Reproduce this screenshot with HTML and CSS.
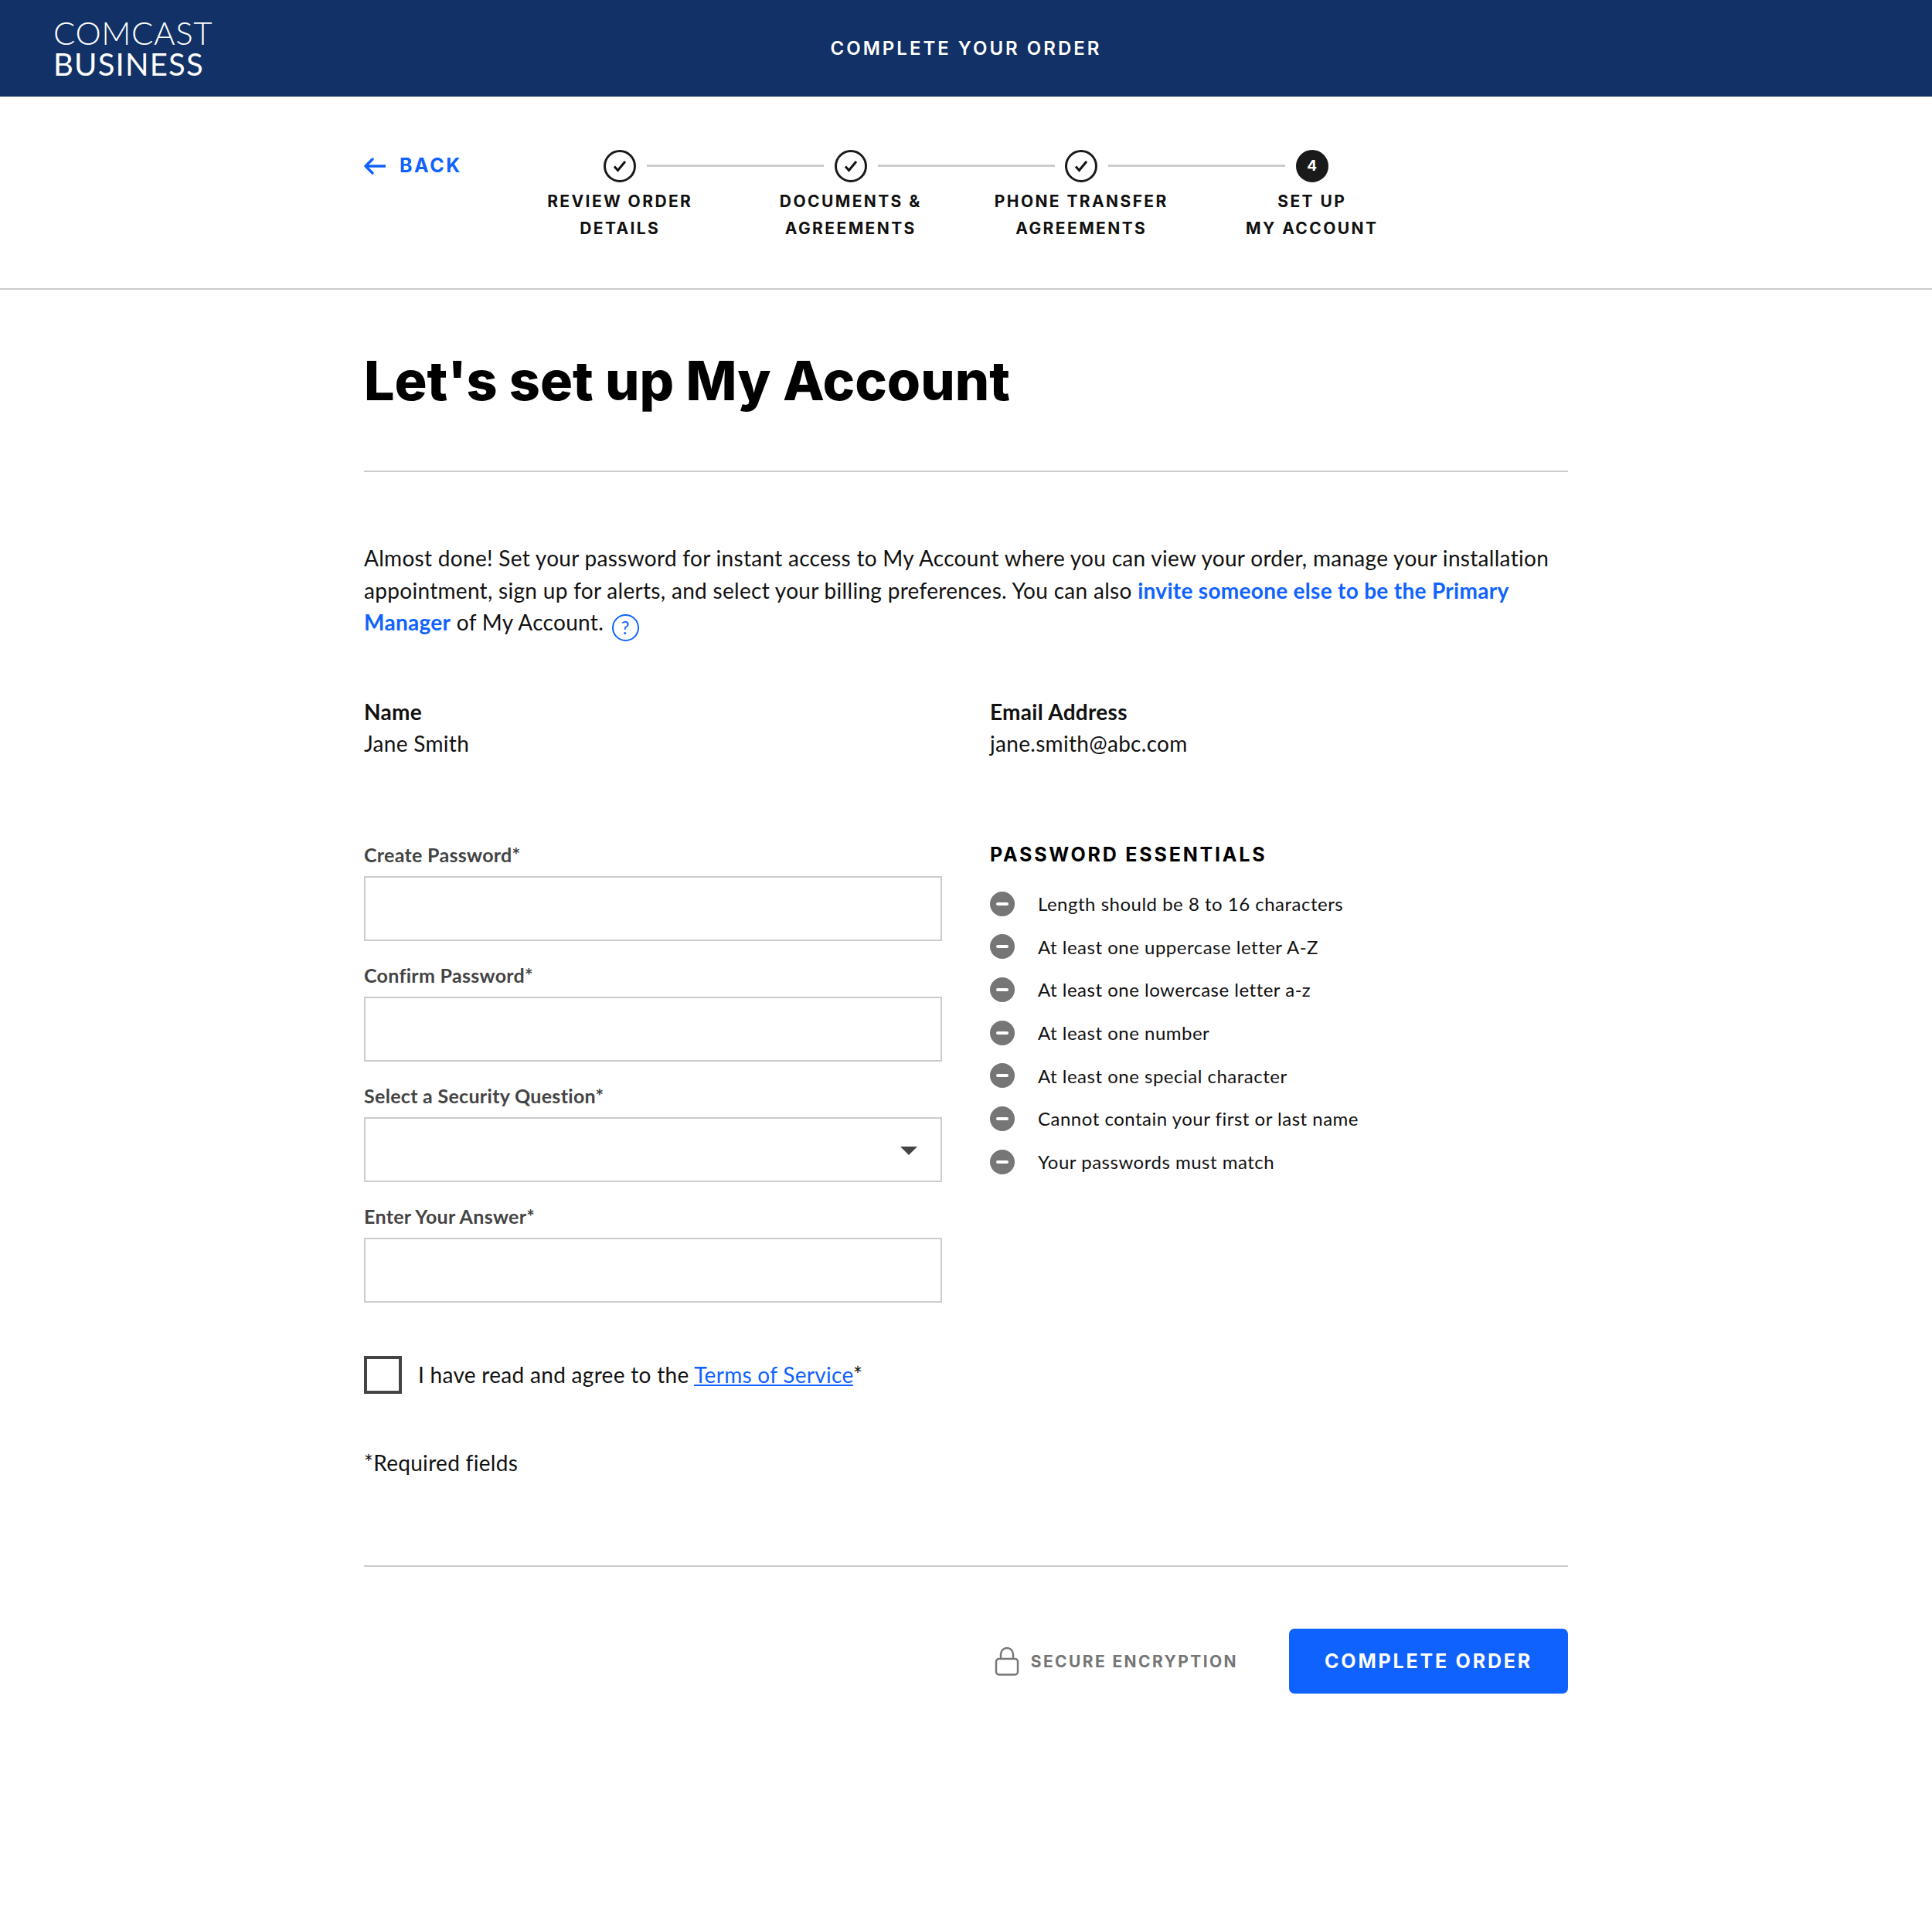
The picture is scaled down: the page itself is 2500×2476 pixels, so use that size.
FILE: index.html
```html
<!DOCTYPE html>
<html lang="en">
<head>
    <meta charset="UTF-8">
    <title>Complete Your Order</title>
    <link rel="stylesheet" href="styles.css">
</head>
<body>
    <div class="header">
        <div class="logo">
            <span class="logo-top">COMCAST</span>
            <span class="logo-bottom">BUSINESS</span>
        </div>
        <div class="header-title">COMPLETE YOUR ORDER</div>
    </div>

    <div class="progress">
        <div class="progress-inner">
            <a class="back" href="#">
                <svg width="28" height="22" viewBox="0 0 28 22"><path d="M27 11H2M11 2l-9 9 9 9" fill="none" stroke="#0f62fe" stroke-width="3.4" stroke-linecap="round" stroke-linejoin="round"/></svg>
                <span>BACK</span>
            </a>
            <div class="steps">
                <div class="step">
                    <div class="step-icon"><svg width="20" height="18" viewBox="0 0 20 18"><path d="M3 9.5l4.5 5L17 3" fill="none" stroke="#111" stroke-width="3"/></svg></div>
                    <div class="step-label">REVIEW ORDER<br>DETAILS</div>
                </div>
                <div class="step">
                    <div class="step-icon"><svg width="20" height="18" viewBox="0 0 20 18"><path d="M3 9.5l4.5 5L17 3" fill="none" stroke="#111" stroke-width="3"/></svg></div>
                    <div class="step-label">DOCUMENTS &amp;<br>AGREEMENTS</div>
                </div>
                <div class="step">
                    <div class="step-icon"><svg width="20" height="18" viewBox="0 0 20 18"><path d="M3 9.5l4.5 5L17 3" fill="none" stroke="#111" stroke-width="3"/></svg></div>
                    <div class="step-label">PHONE TRANSFER<br>AGREEMENTS</div>
                </div>
                <div class="step step-current">
                    <div class="step-icon">4</div>
                    <div class="step-label">SET UP<br>MY ACCOUNT</div>
                </div>
            </div>
        </div>
    </div>

    <div class="container">
        <h1>Let's set up My Account</h1>

        <p class="intro">Almost done! Set your password for instant access to My Account where you can view your order, manage your installation appointment, sign up for alerts, and select your billing preferences. You can also <a href="#">invite someone else to be the Primary Manager</a> of My Account. <span class="help">?</span></p>

        <div class="two-col user-info">
            <div>
                <div class="info-label">Name</div>
                <div>Jane Smith</div>
            </div>
            <div>
                <div class="info-label">Email Address</div>
                <div>jane.smith@abc.com</div>
            </div>
        </div>

        <div class="two-col form-row">
            <form class="fields">
                <div class="form-group">
                    <label for="password">Create Password*</label>
                    <input type="password" id="password">
                </div>
                <div class="form-group">
                    <label for="confirm">Confirm Password*</label>
                    <input type="password" id="confirm">
                </div>
                <div class="form-group">
                    <label for="question">Select a Security Question*</label>
                    <div class="select-box" id="question"></div>
                </div>
                <div class="form-group">
                    <label for="answer">Enter Your Answer*</label>
                    <input type="text" id="answer">
                </div>
            </form>
            <div class="essentials">
                <h2>PASSWORD ESSENTIALS</h2>
                <ul>
                    <li><span class="minus"></span>Length should be 8 to 16 characters</li>
                    <li><span class="minus"></span>At least one uppercase letter A-Z</li>
                    <li><span class="minus"></span>At least one lowercase letter a-z</li>
                    <li><span class="minus"></span>At least one number</li>
                    <li><span class="minus"></span>At least one special character</li>
                    <li><span class="minus"></span>Cannot contain your first or last name</li>
                    <li><span class="minus"></span>Your passwords must match</li>
                </ul>
            </div>
        </div>

        <div class="terms">
            <span class="checkbox"></span>
            <span>I have read and agree to the <a href="#">Terms of Service</a>*</span>
        </div>

        <p class="required">*Required fields</p>

        <div class="footer-row">
            <div class="secure">
                <svg width="32" height="37" viewBox="0 0 32 37"><path d="M8 16V9a8 8 0 0 1 16 0v7" fill="none" stroke="#767676" stroke-width="2.4"/><rect x="2" y="15" width="28" height="20.500" rx="3.500" fill="none" stroke="#767676" stroke-width="2.400"/></svg>
                <span>SECURE ENCRYPTION</span>
            </div>
            <button type="button">COMPLETE ORDER</button>
        </div>
    </div>
</body>
</html>
```

FILE: styles.css
```css
body {
    font-family: Lato, Arial, sans-serif;
    font-size: 28px;
    line-height: 41.6px;
    letter-spacing: 0.3px;
    color: #111;
    margin: 0;
    min-height: 2476px;
    background-color: white;
}

a {
    color: #0f62fe;
}

.header {
    background-color: #123166;
    color: white;
    height: 125px;
    display: grid;
    grid-template-columns: 1fr auto 1fr;
    align-items: center;
    padding-left: 69px;
    padding-right: 69px;
}

.logo {
    display: flex;
    flex-direction: column;
    line-height: 41px;
    letter-spacing: 0;
}

.logo-top {
    font-size: 42px;
    font-weight: 300;
    letter-spacing: 0.6px;
}

.logo-bottom {
    font-size: 40px;
    font-weight: 400;
    letter-spacing: 1.2px;
}

.header-title {
    font-family: Inter, Arial, sans-serif;
    font-size: 24px;
    font-weight: 600;
    letter-spacing: 3px;
}

.progress {
    height: 248px;
    border-bottom: 2px solid #ccc;
}

.progress-inner {
    width: 1558px;
    margin: 0 auto;
    padding-top: 69px;
    display: flex;
}

.back {
    width: 182px;
    height: 42px;
    display: flex;
    align-items: center;
    gap: 18px;
    text-decoration: none;
    font-family: Inter, Arial, sans-serif;
    font-size: 25px;
    font-weight: 700;
    letter-spacing: 2.5px;
}

.steps {
    display: grid;
    grid-template-columns: repeat(4, 298.5px);
}

.step {
    position: relative;
    text-align: center;
}

.step:not(:last-child)::after {
    content: "";
    position: absolute;
    left: 184px;
    top: 19px;
    width: 229px;
    height: 3px;
    background-color: #ccc;
}

.step-icon {
    box-sizing: border-box;
    width: 42px;
    height: 42px;
    margin: 0 auto 7px;
    border: 3px solid #1a1a1a;
    border-radius: 50%;
    display: flex;
    align-items: center;
    justify-content: center;
}

.step-current .step-icon {
    background-color: #1a1a1a;
    color: white;
    font-family: Inter, Arial, sans-serif;
    font-size: 19px;
    font-weight: 700;
    letter-spacing: 0;
}

.step-label {
    font-family: Inter, Arial, sans-serif;
    font-size: 21px;
    font-weight: 700;
    line-height: 35px;
    letter-spacing: 2.4px;
}

.container {
    width: 1558px;
    margin: 0 auto;
}

h1 {
    font-family: Inter, Arial, sans-serif;
    font-size: 70px;
    font-weight: 800;
    line-height: 84px;
    letter-spacing: 0;
    color: #000;
    margin: 0;
    padding: 76px 0 74px;
    border-bottom: 2px solid #ccc;
}

.intro {
    margin: 91px 0 0;
}

.intro a {
    font-weight: 700;
    text-decoration: none;
}

.help {
    display: inline-flex;
    box-sizing: border-box;
    width: 35px;
    height: 35px;
    border: 2px solid #0f62fe;
    border-radius: 50%;
    color: #0f62fe;
    align-items: center;
    justify-content: center;
    font-size: 24px;
    line-height: 1;
    letter-spacing: 0;
    margin-left: 3px;
    vertical-align: -5px;
}

.two-col {
    display: grid;
    grid-template-columns: 810px 748px;
}

.user-info {
    margin-top: 71px;
}

.info-label {
    font-weight: 700;
}

.form-row {
    margin-top: 107px;
}

.form-group {
    width: 748px;
    margin-bottom: 29px;
}

.form-group label {
    display: block;
    font-size: 25px;
    font-weight: 700;
    color: #444;
    line-height: 30px;
    margin-bottom: 13px;
}

.form-group input,
.select-box {
    display: block;
    box-sizing: border-box;
    width: 100%;
    height: 84px;
    border: 2px solid #ccc;
    background-color: white;
    position: relative;
}

.select-box::after {
    content: "";
    position: absolute;
    right: 30px;
    top: 36px;
    border-left: 11px solid transparent;
    border-right: 11px solid transparent;
    border-top: 11px solid #444;
}

h2 {
    font-family: Inter, Arial, sans-serif;
    font-size: 25px;
    font-weight: 700;
    line-height: 30px;
    letter-spacing: 2.8px;
    color: #000;
    margin: 0 0 21px;
}

.essentials ul {
    list-style: none;
    margin: 0;
    padding: 0;
}

.essentials li {
    display: flex;
    align-items: center;
    height: 55.700px;
    font-size: 24px;
    letter-spacing: 0.5px;
}

.minus {
    width: 32px;
    height: 32px;
    margin-right: 30px;
    border-radius: 50%;
    background-color: #767676;
    display: flex;
    align-items: center;
    justify-content: center;
}

.minus::after {
    content: "";
    width: 16px;
    height: 4px;
    border-radius: 2px;
    background-color: white;
}

.terms {
    display: flex;
    align-items: center;
    gap: 21px;
    margin-top: 40px;
}

.checkbox {
    box-sizing: border-box;
    width: 49px;
    height: 49px;
    border: 4px solid #444;
}

.required {
    margin: 69px 0 0;
    padding-bottom: 112px;
    border-bottom: 2px solid #ccc;
}

.footer-row {
    display: flex;
    justify-content: flex-end;
    align-items: center;
    margin-top: 80px;
}

.secure {
    display: flex;
    align-items: center;
    gap: 15px;
    margin-right: 66px;
    font-family: Inter, Arial, sans-serif;
    font-size: 21px;
    font-weight: 700;
    letter-spacing: 2.4px;
    color: #767676;
}

button {
    width: 361px;
    height: 84px;
    border: 0;
    border-radius: 7px;
    background-color: #0f62fe;
    color: white;
    font-family: Inter, Arial, sans-serif;
    font-size: 25px;
    font-weight: 700;
    letter-spacing: 2.8px;
}
```
